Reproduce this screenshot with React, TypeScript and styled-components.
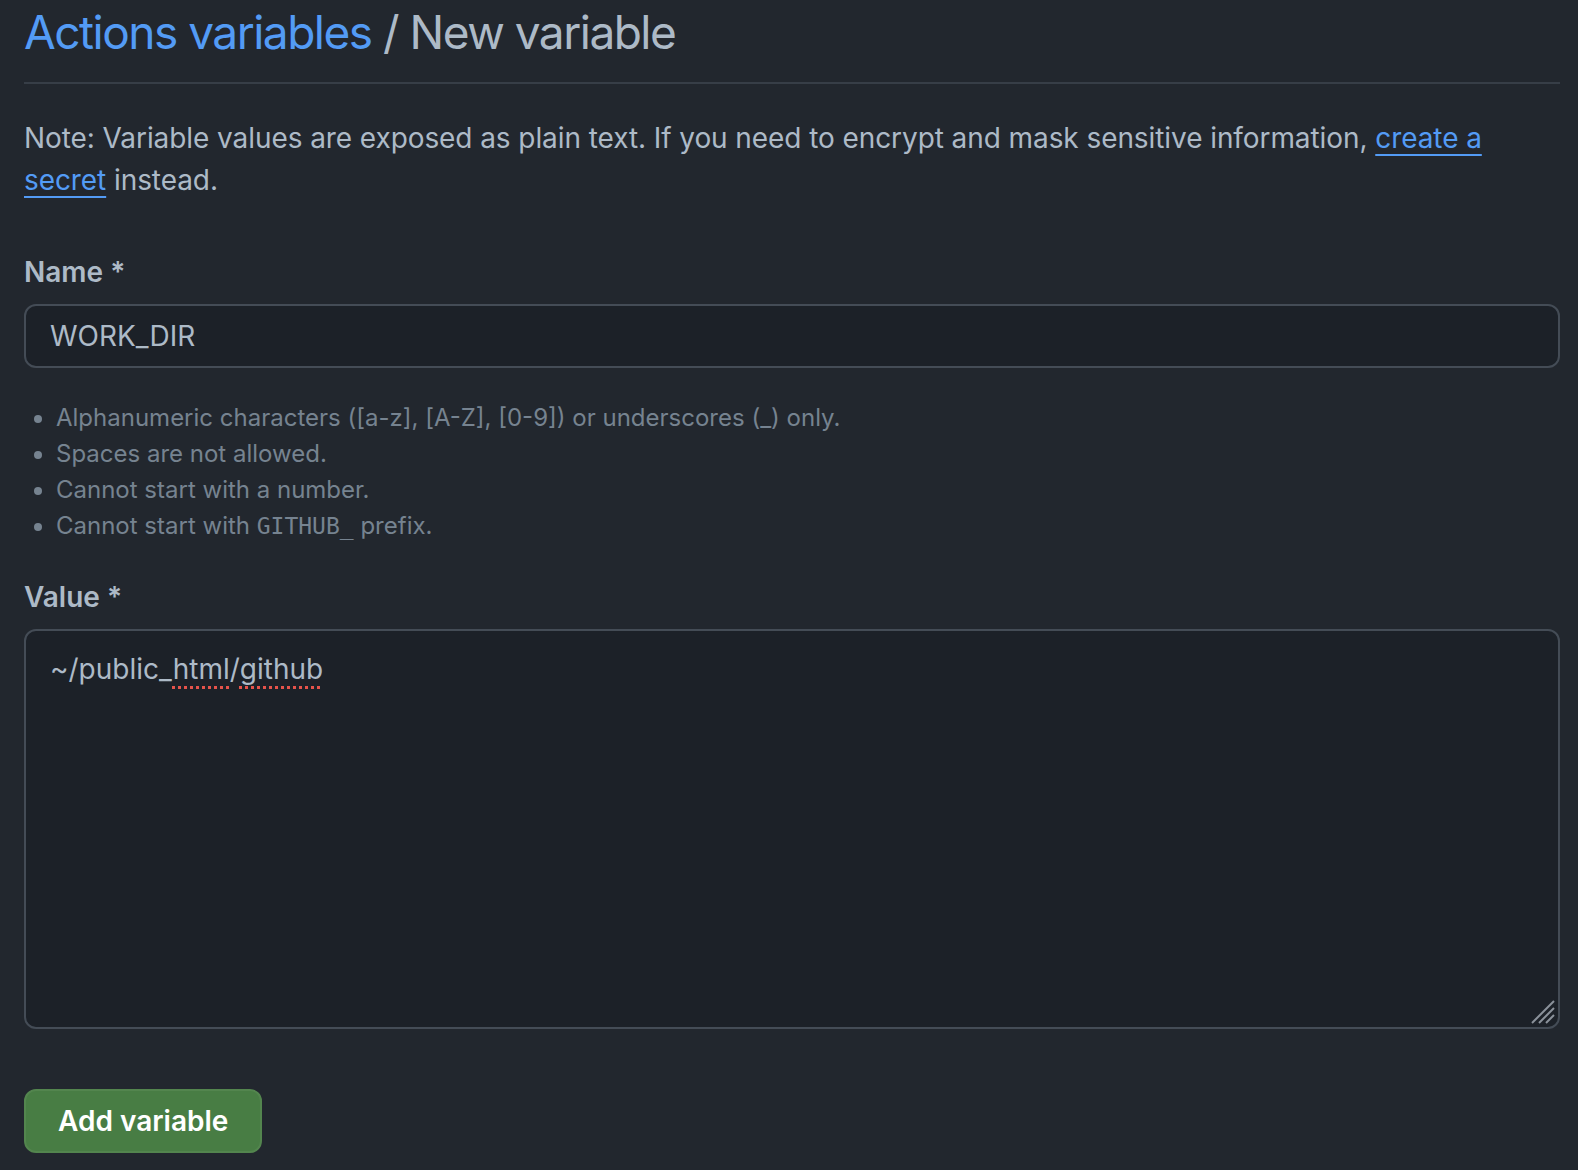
import * as React from 'react'
import styled, { createGlobalStyle } from 'styled-components'

const GlobalStyle = createGlobalStyle`
  html, body {
    margin: 0;
    padding: 0;
    background: #22272e;
  }
  body {
    font-family: Inter, "Noto Sans", "Liberation Sans", sans-serif;
    color: #adbac7;
  }
`

const Page = styled.main`
  padding: 0 18px 40px 24px;
`

const Subhead = styled.div`
  padding: 2px 0 20px;
  border-bottom: 2px solid #373e47;
`

const Heading = styled.h2`
  margin: 0;
  font-size: 46px;
  line-height: 60px;
  font-weight: 400;
  letter-spacing: -1.5px;
  color: #adbac7;
`

const Link = styled.a`
  color: #539bf5;
  text-decoration: none;
`

const UnderLink = styled(Link)`
  text-decoration: underline;
  text-decoration-thickness: 2px;
  text-underline-offset: 6px;
`

const Note = styled.p`
  margin: 33px 0 0;
  font-size: 28px;
  line-height: 42px;
  letter-spacing: -0.08px;
  color: #adbac7;
`

const FormGroup = styled.div<{ $gap: number }>`
  margin-top: ${({ $gap }) => $gap}px;
`

const Label = styled.label`
  display: block;
  margin-bottom: 11px;
  font-size: 28px;
  line-height: 42px;
  font-weight: 600;
  color: #adbac7;
`

const TextInput = styled.input`
  box-sizing: border-box;
  display: block;
  width: 100%;
  height: 64px;
  padding: 0 24px;
  margin: 0;
  font-family: inherit;
  font-size: 28px;
  color: #adbac7;
  background: #1c2128;
  border: 2px solid #444c56;
  border-radius: 12px;
  outline: none;
`

const RuleList = styled.ul`
  margin: 32px 0 0;
  padding: 0 0 0 32px;
  font-size: 24px;
  line-height: 36px;
  color: #768390;
`

const Rule = styled.li`
  height: 36px;
`

const Code = styled.code`
  font-family: "DejaVu Sans Mono", "Liberation Mono", monospace;
  font-size: 23px;
`

const TextArea = styled.div`
  position: relative;
  box-sizing: border-box;
  height: 400px;
  padding: 17px 24px;
  font-size: 28px;
  line-height: 42px;
  color: #adbac7;
  background: #1c2128;
  border: 2px solid #444c56;
  border-radius: 12px;
`

const Misspelt = styled.span`
  text-decoration: underline dotted #e5534b;
  text-decoration-thickness: 3px;
  text-underline-offset: 7px;
`

const Grip = styled.svg`
  position: absolute;
  right: 2px;
  bottom: 2px;
`

const Button = styled.button`
  box-sizing: border-box;
  margin-top: 60px;
  height: 64px;
  padding: 0 32px;
  font-family: inherit;
  font-size: 28px;
  font-weight: 600;
  color: #ffffff;
  background: #487d44;
  border: 2px solid #53854e;
  border-radius: 12px;
  cursor: pointer;
`

const App: React.FC = () => {
  return (
    <>
      <GlobalStyle />
      <Page>
        <Subhead>
          <Heading>
            <Link href="#">Actions variables</Link> / New variable
          </Heading>
        </Subhead>

        <Note>
          Note: Variable values are exposed as plain text. If you need to encrypt and mask sensitive
          information, <UnderLink href="#">create a secret</UnderLink> instead.
        </Note>

        <FormGroup $gap={50}>
          <Label htmlFor="name">Name *</Label>
          <TextInput id="name" defaultValue="WORK_DIR" />
          <RuleList>
            <Rule>Alphanumeric characters ([a-z], [A-Z], [0-9]) or underscores (_) only.</Rule>
            <Rule>Spaces are not allowed.</Rule>
            <Rule>Cannot start with a number.</Rule>
            <Rule>
              Cannot start with <Code>GITHUB_</Code> prefix.
            </Rule>
          </RuleList>
        </FormGroup>

        <FormGroup $gap={32}>
          <Label>Value *</Label>
          <TextArea>
            ~/public_<Misspelt>html</Misspelt>/<Misspelt>github</Misspelt>
            <Grip width="26" height="26" viewBox="0 0 26 26">
              <g stroke="#8b929b" strokeWidth="2">
                <line x1="2" y1="24" x2="24" y2="2" />
                <line x1="9" y1="24" x2="24" y2="9" />
                <line x1="16" y1="24" x2="24" y2="16" />
              </g>
            </Grip>
          </TextArea>
        </FormGroup>

        <Button type="button">Add variable</Button>
      </Page>
    </>
  )
}

export default App
